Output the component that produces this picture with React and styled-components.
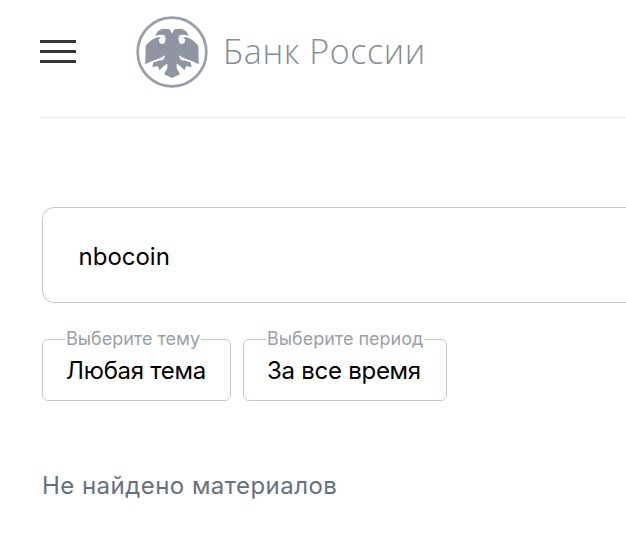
import React from 'react';
import styled, { createGlobalStyle } from 'styled-components';

const GlobalStyle = createGlobalStyle`
  html, body {
    margin: 0;
    padding: 0;
    background: #fff;
    overflow: hidden;
  }
`;

const Page = styled.div`
  width: 626px;
  height: 559px;
  overflow: hidden;
  font-family: Inter, 'Noto Sans', sans-serif;
`;

const Header = styled.header`
  display: flex;
  align-items: center;
  margin-left: 40px;
  height: 118px;
  padding-bottom: 13px;
  box-sizing: border-box;
  border-bottom: 1px solid #eceef0;
`;

const Burger = styled.div`
  display: flex;
  flex-direction: column;
  gap: 7px;
  width: 36px;
  padding-bottom: 1px;
  margin-right: 60px;
`;

const BurgerLine = styled.span`
  display: block;
  height: 3px;
  background: #333538;
`;

const Logo = styled.div`
  display: flex;
  align-items: center;
  gap: 15px;
`;

const LogoText = styled.span`
  padding-bottom: 2px;
  font-family: 'Open Sans', sans-serif;
  font-weight: 300;
  font-size: 34px;
  letter-spacing: 0.58px;
  color: #868c9b;
  white-space: nowrap;
`;

const Main = styled.main`
  padding: 89px 0 0 42px;
`;

const SearchBox = styled.div`
  display: flex;
  align-items: center;
  width: 700px;
  height: 96px;
  box-sizing: border-box;
  padding: 2px 0 0 35.5px;
  border: 1px solid #c6c8cc;
  border-radius: 12px;
  font-size: 24px;
  color: #000;
`;

const Filters = styled.div`
  display: flex;
  gap: 12px;
  margin-top: 26px;
`;

const Filter = styled.fieldset`
  margin: 0;
  min-width: 0;
  width: ${(p) => p.$width}px;
  height: 72px;
  box-sizing: border-box;
  padding: 6px 23px 0;
  border: 1px solid #c6c8cc;
  border-radius: 6px;
  font-size: 24px;
  line-height: 32px;
  letter-spacing: -0.27px;
  color: #000;
  white-space: nowrap;
`;

const FilterLabel = styled.legend`
  padding: 0 1px;
  margin-left: -1px;
  font-size: 18px;
  line-height: 20px;
  letter-spacing: 0;
  color: #9a9fa9;
`;

const Empty = styled.p`
  margin: 69px 0 0;
  font-size: 24px;
  line-height: 32px;
  letter-spacing: 0.46px;
  color: #667080;
`;

const wing =
  'M456 100 L449 87 L428 85 L414 92 L405 106 L420 103 L432 104 L437 114 L434 128 C428 134 418 130 417 122 C416 116 420 112 424 110 C410 108 392 118 377 136 L376 192 L392 184 L422 172 L436 165 L430 178 L400 186 L397 200 L414 198 L418 210 L432 196 L442 190 L442 204 L432 222 L456 233 Z';

const BankLogo = () => (
  <svg width="72" height="72" viewBox="348 47 216 216">
    <circle cx="456" cy="155" r="103" fill="none" stroke="#999eab" strokeWidth="8" />
    <path fill="#8f95a3" d={wing} />
    <path fill="#8f95a3" d={wing} transform="matrix(-1 0 0 1 912 0)" />
  </svg>
);

const App = () => {
  return (
    <Page>
      <GlobalStyle />
      <Header>
        <Burger>
          <BurgerLine />
          <BurgerLine />
          <BurgerLine />
        </Burger>
        <Logo>
          <BankLogo />
          <LogoText>Банк России</LogoText>
        </Logo>
      </Header>
      <Main>
        <SearchBox>nbocoin</SearchBox>
        <Filters>
          <Filter $width={189}>
            <FilterLabel>Выберите тему</FilterLabel>
            Любая тема
          </Filter>
          <Filter $width={204}>
            <FilterLabel>Выберите период</FilterLabel>
            За все время
          </Filter>
        </Filters>
        <Empty>Не найдено материалов</Empty>
      </Main>
    </Page>
  );
};

export default App;
